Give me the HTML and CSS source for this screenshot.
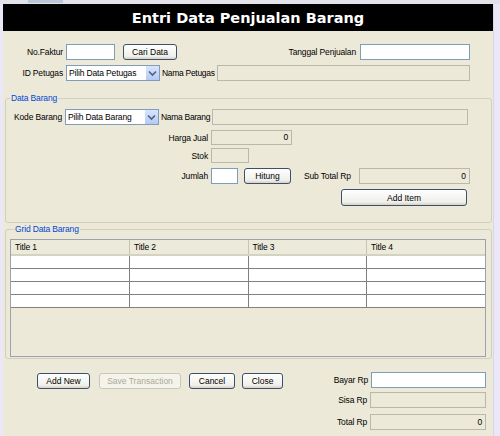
FILE: index.html
```html
<!DOCTYPE html>
<html lang="en">
<head>
  <meta charset="UTF-8">
  <title>Entri Data Penjualan Barang</title>
  <link rel="stylesheet" href="styles.css">
</head>
<body>
  <div class="window">
    <div class="topbar"><span class="tab"></span></div>
    <div class="frame">
      <h1 class="header">Entri Data Penjualan Barang</h1>

      <div class="head-form">
        <div class="row r1">
          <label class="lbl w60">No.Faktur</label>
          <input class="field w49" type="text">
          <button class="btn btn-cari">Cari Data</button>
          <label class="lbl push">Tanggal Penjualan</label>
          <input class="field w110" type="text">
        </div>
        <div class="row r2">
          <label class="lbl w60">ID Petugas</label>
          <div class="combo w94"><span>Pilih Data Petugas</span><i class="arrow"><svg width="9" height="7" viewBox="0 0 9 7"><path d="M1 1.5 L4.5 5 L8 1.5" fill="none" stroke="#4d6185" stroke-width="1.6"/></svg></i></div>
          <label class="lbl">Nama Petugas</label>
          <div class="field off grow"></div>
        </div>
      </div>

      <fieldset class="group g-barang">
        <legend>Data Barang</legend>
        <div class="row r-kode">
          <label class="lbl w56">Kode Barang</label>
          <div class="combo w94"><span>Pilih Data Barang</span><i class="arrow"><svg width="9" height="7" viewBox="0 0 9 7"><path d="M1 1.5 L4.5 5 L8 1.5" fill="none" stroke="#4d6185" stroke-width="1.6"/></svg></i></div>
          <label class="lbl">Nama Barang</label>
          <div class="field off grow"></div>
        </div>
        <div class="row r-harga">
          <label class="lbl w204">Harga Jual</label>
          <div class="field off w80 num">0</div>
        </div>
        <div class="row r-stok">
          <label class="lbl w204">Stok</label>
          <div class="field off w38"></div>
        </div>
        <div class="row r-jumlah">
          <label class="lbl w204">Jumlah</label>
          <input class="field w27" type="text">
          <button class="btn btn-hitung">Hitung</button>
          <label class="lbl subtotal">Sub Total Rp</label>
          <div class="field off w111 num">0</div>
        </div>
        <div class="row r-add">
          <button class="btn btn-add">Add Item</button>
        </div>
      </fieldset>

      <fieldset class="group g-grid">
        <legend>Grid Data Barang</legend>
        <div class="table">
          <table>
            <thead>
              <tr><th>Title 1</th><th>Title 2</th><th>Title 3</th><th>Title 4</th></tr>
            </thead>
            <tbody>
              <tr><td></td><td></td><td></td><td></td></tr>
              <tr><td></td><td></td><td></td><td></td></tr>
              <tr><td></td><td></td><td></td><td></td></tr>
              <tr><td></td><td></td><td></td><td></td></tr>
            </tbody>
          </table>
        </div>
      </fieldset>

      <div class="bottom">
        <div class="actions">
          <button class="btn b-new">Add New</button>
          <button class="btn b-save" disabled>Save Transaction</button>
          <button class="btn b-cancel">Cancel</button>
          <button class="btn b-close">Close</button>
        </div>
        <div class="totals">
          <div class="row">
            <label class="lbl">Bayar Rp</label>
            <input class="field w115" type="text">
          </div>
          <div class="row">
            <label class="lbl">Sisa Rp</label>
            <div class="field off w116"></div>
          </div>
          <div class="row">
            <label class="lbl">Total Rp</label>
            <div class="field off w116 num">0</div>
          </div>
        </div>
      </div>
    </div>
  </div>
</body>
</html>
```

FILE: styles.css
```css
body {
  margin: 0;
  width: 500px;
  height: 436px;
  overflow: hidden;
  background: #eae8f8;
  font-family: 'Liberation Sans', Arial, sans-serif;
  font-size: 8.5px;
  letter-spacing: -0.15px;
  color: #000;
}
.topbar {
  height: 4px;
  background: #e2e2ea;
  position: relative;
}
.tab {
  position: absolute;
  left: 28px;
  top: 0;
  width: 35px;
  height: 3px;
  background: #b8c8d8;
}
.frame {
  margin-left: 3px;
  width: 490px;
  height: 432px;
  background: #ece9d8;
  border-right: 1px solid #d8d6e8;
}
.header {
  margin: 0;
  height: 27px;
  line-height: 28px;
  background: #000;
  color: #fff;
  text-align: center;
  font-family: 'DejaVu Sans', sans-serif;
  font-size: 14.5px;
  font-weight: bold;
  letter-spacing: 0;
}
.row {
  display: flex;
  align-items: center;
  height: 16px;
}
.lbl {
  white-space: nowrap;
  text-align: right;
  margin-right: 3px;
  flex: none;
}
.combo + .lbl { letter-spacing: -0.3px; margin-right: 2px; }
.push { margin-left: auto; margin-right: 4px; }
.w56 { width: 56px; }
.w60 { width: 60px; }
.w204 { width: 202px; }
.field {
  box-sizing: border-box;
  height: 16px;
  border: 1px solid #7f9db9;
  background: #fff;
  font: inherit;
  padding: 0 3px;
  margin: 0;
  flex: none;
}
.field.off {
  background: #ece9d8;
  border-color: #b9b8ab;
}
.num {
  text-align: right;
  line-height: 14px;
}
.grow { flex: 1; min-width: 0; }
.w27 { width: 27px; }
.w38 { width: 38px; }
.w49 { width: 49px; }
.w80 { width: 81px; }
.w94 { width: 94px; }
.w110 { width: 110px; }
.w111 { width: 111px; }
.w115 { width: 115px; }
.w116 { width: 116px; }

.combo {
  box-sizing: border-box;
  height: 16px;
  border: 1px solid #7f9db9;
  background: #fff;
  display: flex;
  align-items: center;
  padding-left: 2px;
  margin-right: 2px;
  flex: none;
}
.combo span { flex: 1; white-space: nowrap; }
.arrow {
  width: 13px;
  height: 14px;
  background: linear-gradient(#d9e5fd, #b4c9f5);
  border-left: 1px solid #fff;
  display: flex;
  align-items: center;
  justify-content: center;
}

.btn {
  box-sizing: border-box;
  height: 16px;
  border: 1px solid #3c4f6e;
  border-radius: 3px;
  background: linear-gradient(#fefefe, #f0f0ea 80%, #d6d0c5);
  font: inherit;
  padding: 0;
  color: #000;
  flex: none;
}
.btn:disabled {
  border-color: #c9c7ba;
  background: #f5f4ea;
  color: #aca899;
}

.head-form { padding: 13px 23px 0 0; }
.r2 { margin-top: 5px; }
.btn-cari { width: 54px; margin-left: 8px; }

.group {
  margin: 0 0 0 2px;
  width: 487px;
  min-inline-size: 0;
  box-sizing: border-box;
  border: 1px solid #d0d0bf;
  border-radius: 3px;
  padding: 0;
}
.group legend {
  color: #0046d5;
  padding: 0 1px;
  margin-left: 4px;
  font-size: 8.5px;
}
.g-barang {
  margin-top: 12px;
  height: 130px;
  padding: 0 23px 0 0;
}
.r-kode { margin-top: 6px; }
.r-harga { margin-top: 5px; height: 15px; }
.r-stok { margin-top: 3px; height: 15px; }
.r-stok .field { height: 15px; }
.r-harga .field { height: 15px; line-height: 13px; }
.r-jumlah { margin-top: 5px; }
.btn-hitung { width: 47px; margin-left: 6px; }
.subtotal { margin-left: 13px; margin-right: 8px; }
.r-add { justify-content: flex-end; margin-top: 5px; height: 17px; }
.btn-add { width: 126px; height: 17px; margin-right: 1px; }

.g-grid {
  margin-top: 1px;
  height: 135px;
  padding: 5px 5px 0 4px;
}
.table {
  height: 118px;
  border: 1px solid #9aa3ad;
  box-sizing: border-box;
}
table {
  width: 100%;
  border-collapse: collapse;
  table-layout: fixed;
}
th {
  height: 15px;
  box-sizing: border-box;
  text-align: left;
  font-weight: normal;
  padding: 0 4px;
  background: #ebeadb;
  border-right: 1px solid #c7c5b2;
  border-bottom: 2px solid #d6d2c2;
}
th:last-child { border-right: none; }
td {
  height: 12px;
  padding: 0;
  background: #fff;
  border-right: 1px solid #808080;
  border-bottom: 1px solid #808080;
}
td:last-child { border-right: none; }

.bottom {
  display: flex;
  justify-content: space-between;
  padding: 13px 7px 0 34px;
}
.actions {
  display: flex;
  gap: 8px;
  height: 16px;
  margin-top: 1px;
}
.b-new { width: 53px; }
.b-save { width: 82px; margin-left: 1px; }
.b-cancel { width: 46px; }
.b-close { width: 41px; margin-left: -1px; }
.totals .row { justify-content: flex-end; }
.totals .row + .row { margin-top: 4px; }
.totals .row:last-child { margin-top: 6px; }
```
